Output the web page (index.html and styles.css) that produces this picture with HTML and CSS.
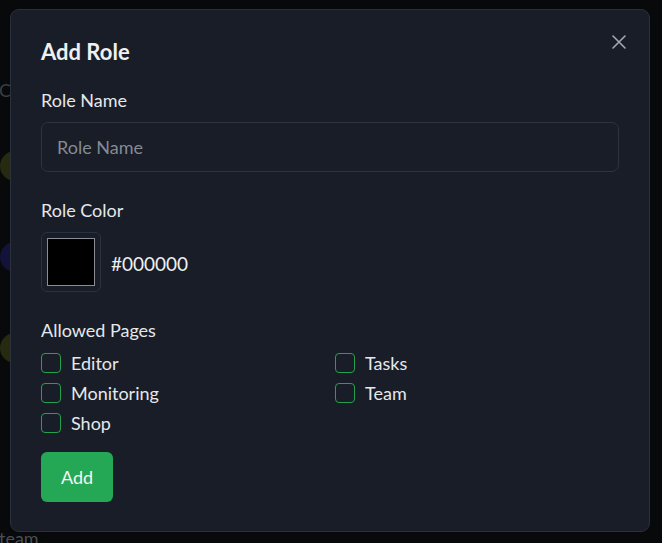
FILE: index.html
```html
<!DOCTYPE html>
<html lang="en">
<head>
<meta charset="utf-8">
<title>Add Role</title>
<link rel="stylesheet" href="styles.css">
</head>
<body>
<div class="page">
  <p class="bg-title">Co</p>
  <div class="bg-list">
    <div class="bg-row"><span class="bg-dot olive"></span></div>
    <div class="bg-row"><span class="bg-dot indigo"></span></div>
    <div class="bg-row"><span class="bg-dot olive"></span></div>
  </div>
  <p class="bg-foot">team.</p>
</div>

<div class="overlay">
  <div class="modal">
    <button class="close" aria-label="Close">
      <svg width="14" height="14" viewBox="0 0 14 14"><path d="M1 1L13 13M13 1L1 13" stroke="#a3a8b0" stroke-width="1.6" stroke-linecap="round"/></svg>
    </button>
    <h2 class="title">Add Role</h2>

    <div class="field">
      <label class="label">Role Name</label>
      <input class="input" type="text" placeholder="Role Name">
    </div>

    <div class="field">
      <label class="label">Role Color</label>
      <div class="color-row">
        <div class="swatch-box"><div class="swatch"></div></div>
        <span class="hex">#000000</span>
      </div>
    </div>

    <div class="field pages">
      <label class="label">Allowed Pages</label>
      <div class="grid">
        <label class="check"><span class="box"></span>Editor</label>
        <label class="check"><span class="box"></span>Tasks</label>
        <label class="check"><span class="box"></span>Monitoring</label>
        <label class="check"><span class="box"></span>Team</label>
        <label class="check"><span class="box"></span>Shop</label>
      </div>
    </div>

    <button class="add">Add</button>
  </div>
</div>
</body>
</html>
```

FILE: styles.css
```css
* { box-sizing: border-box; }
html, body { margin: 0; height: 100%; }
body {
  background: #07090b;
  font-family: Lato, "Open Sans", sans-serif;
  color: #e6e8eb;
  overflow: hidden;
  position: relative;
}
.page {
  padding-top: 78px;
  margin-left: -1px;
  height: 100%;
  display: flex;
  flex-direction: column;
}
.bg-title {
  margin: 0;
  font-size: 18px;
  line-height: 24px;
  color: #3a3e44;
  white-space: nowrap;
}
.bg-list {
  margin-top: 49px;
  display: flex;
  flex-direction: column;
  gap: 61px;
  padding-left: 1px;
}
.bg-row { height: 30px; }
.bg-dot {
  display: block;
  width: 30px;
  height: 30px;
  border-radius: 50%;
}
.olive { background: #262b10; }
.indigo { background: #13133a; }
.bg-foot {
  margin: auto 0 0;
  font-size: 18px;
  line-height: 22px;
  color: #4a4f55;
  transform: translateY(6px);
}

.overlay {
  position: absolute;
  inset: 0;
}
.modal {
  position: absolute;
  left: 10px;
  top: 9px;
  width: 640px;
  background: #181d27;
  border: 1px solid #2a303c;
  border-radius: 9px;
  padding: 30px 30px 29px;
}
.close {
  position: absolute;
  top: 25px;
  right: 23px;
  width: 14px;
  height: 14px;
  padding: 0;
  border: 0;
  background: none;
  display: flex;
}
.title {
  margin: 0 0 24px;
  font-size: 22px;
  line-height: 24px;
  font-weight: 700;
  color: #eef0f2;
}
.field { margin-bottom: 26px; }
.label {
  display: block;
  font-size: 18px;
  line-height: 24px;
  margin-bottom: 10px;
  color: #e6e8eb;
}
.input {
  display: block;
  width: 100%;
  height: 50px;
  background: #181d27;
  border: 1px solid #2c3342;
  border-radius: 7px;
  padding: 0 15px;
  font-family: inherit;
  font-size: 18px;
  color: #e6e8eb;
  outline: none;
}
.input::placeholder { color: #858b94; }
.color-row {
  display: flex;
  align-items: center;
  gap: 10px;
}
.swatch-box {
  width: 60px;
  height: 60px;
  border: 1px solid #2a3140;
  border-radius: 6px;
  padding: 5px;
}
.swatch {
  width: 100%;
  height: 100%;
  background: #000;
  border: 1px solid #8a8e94;
}
.hex {
  font-size: 19px;
  color: #eef0f2;
  padding-top: 2px;
}
.pages { margin-bottom: 14px; }
.pages .label { margin-bottom: 6px; }
.grid {
  display: grid;
  grid-template-columns: 1fr 1fr;
  column-gap: 10px;
}
.check {
  display: flex;
  align-items: center;
  gap: 10px;
  height: 30px;
  font-size: 18px;
  color: #e6e8eb;
}
.box {
  width: 20px;
  height: 20px;
  border: 1px solid #23a14f;
  border-radius: 4px;
  flex: none;
}
.add {
  display: block;
  width: 72px;
  height: 50px;
  border: 0;
  border-radius: 6px;
  background: #25a855;
  color: #f4f6f5;
  font-family: inherit;
  font-size: 18px;
}
```
